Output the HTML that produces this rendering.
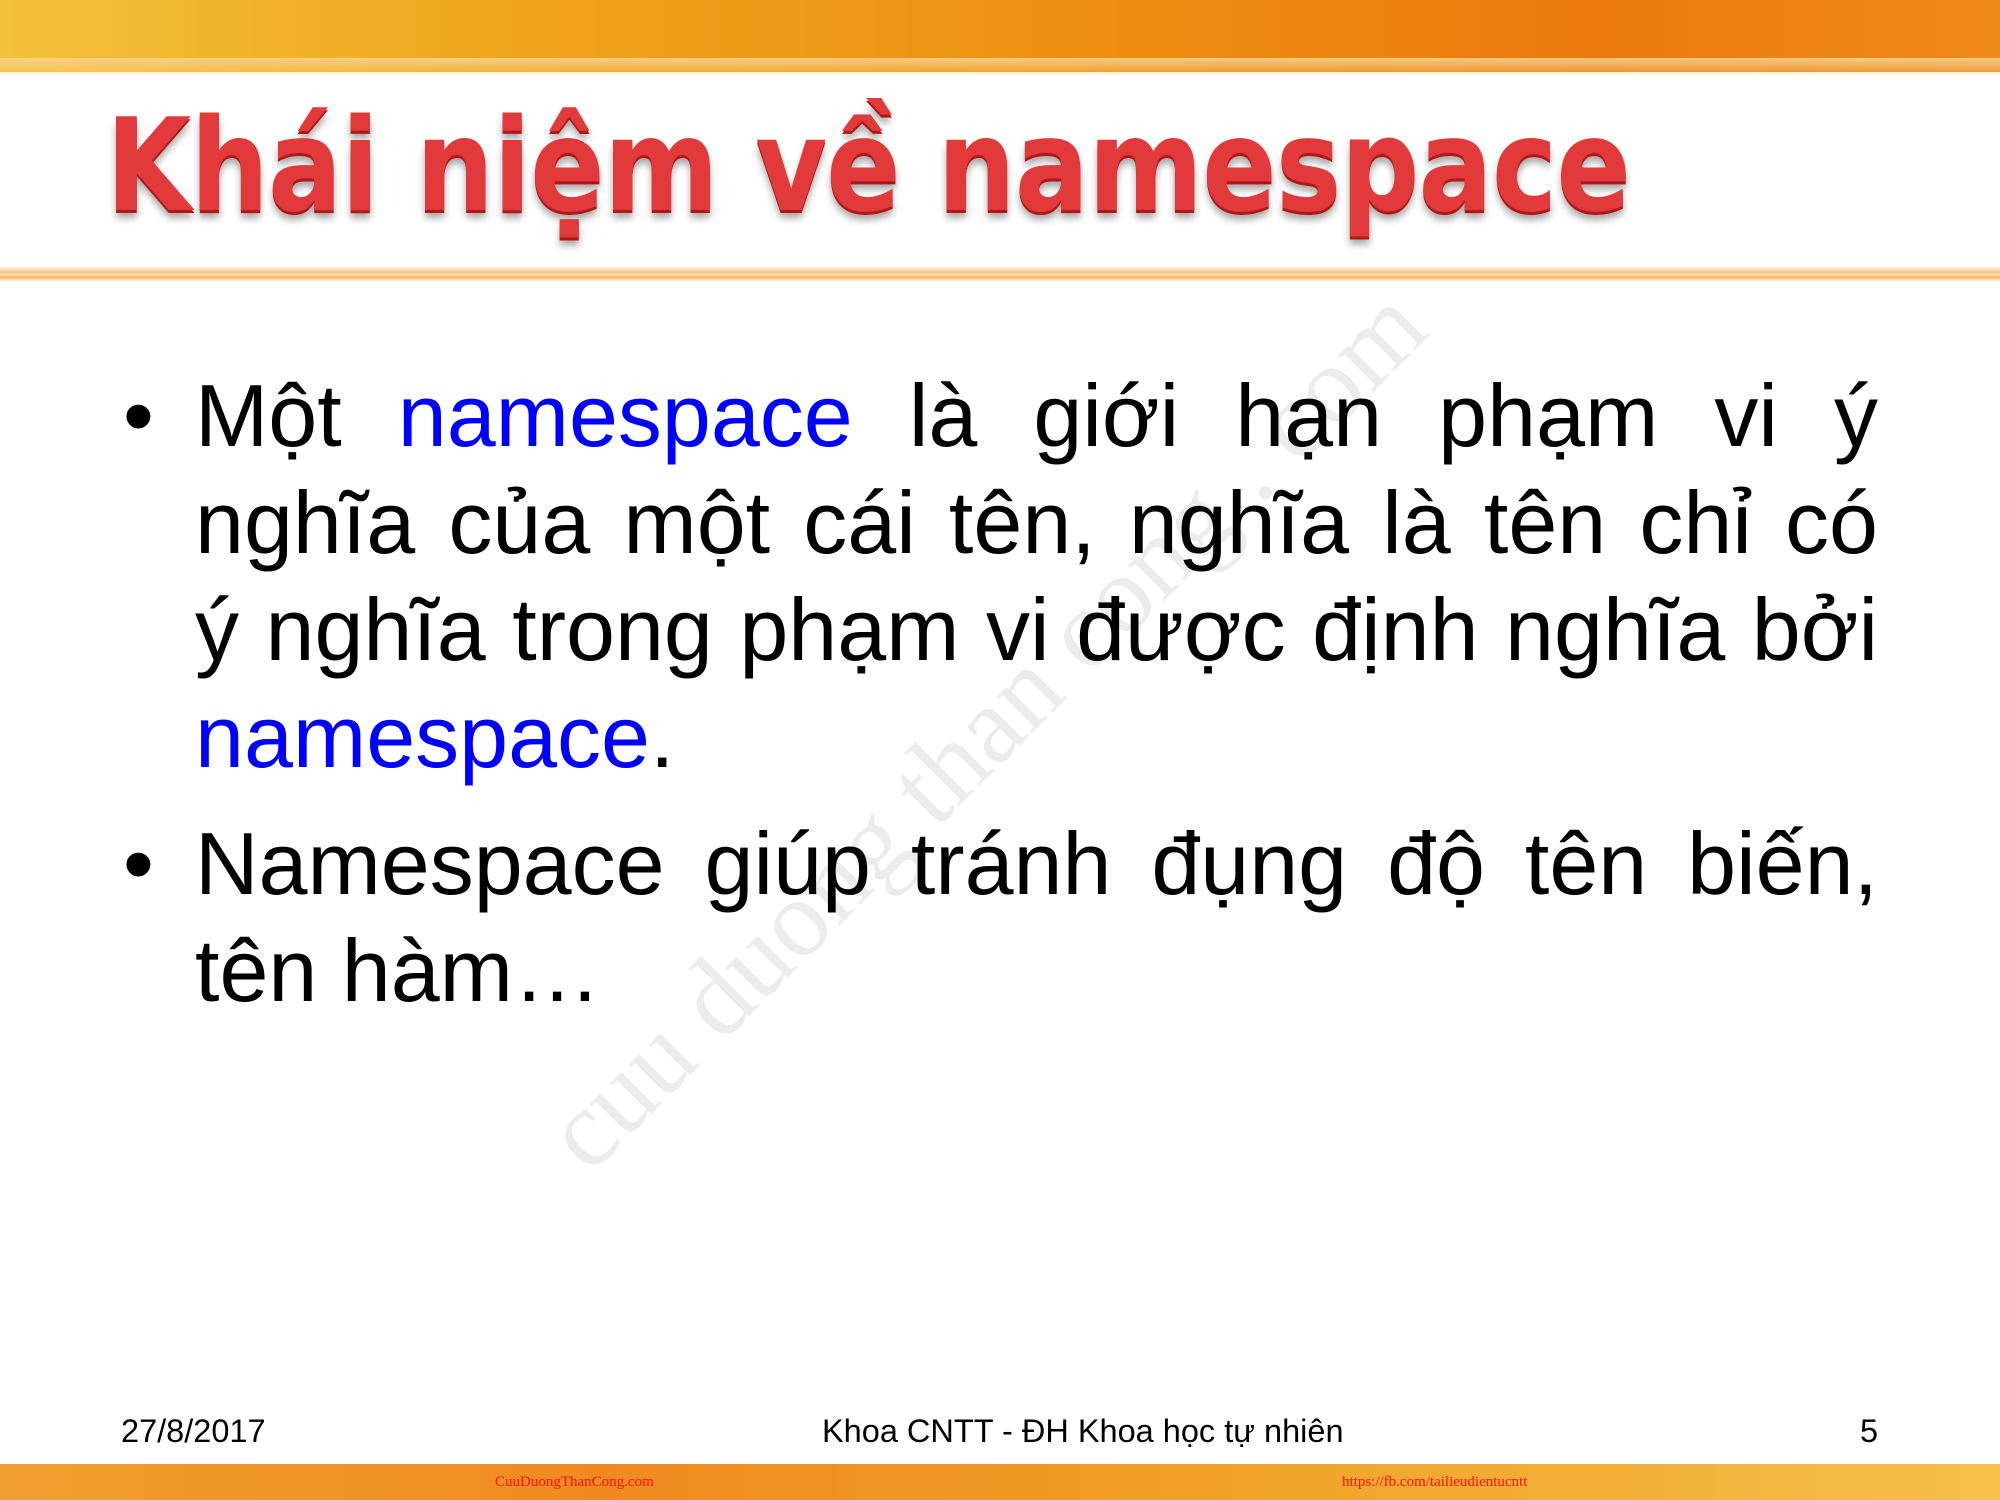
<!DOCTYPE html>
<html><head><meta charset="utf-8"><style>
html,body{margin:0;padding:0}
body{width:2000px;height:1500px;position:relative;overflow:hidden;background:#fff;font-family:"Liberation Sans","DejaVu Sans",sans-serif}
.top{position:absolute;left:0;top:0;width:2000px;height:72px;background:linear-gradient(90deg,#f2c23a 0%,#f0a51e 25%,#ee8e12 55%,#ec7a0e 80%,#f08a1a 100%)}
.top2{position:absolute;left:0;top:58px;width:2000px;height:20px;background:linear-gradient(180deg,rgba(250,210,140,.9),rgba(255,255,255,0))}
.line{position:absolute;left:0;top:266px;width:2000px;height:16px;background:linear-gradient(180deg,rgba(255,255,255,0),#f7c27a 40%,#fde3b8 55%,#f5b25a 70%,rgba(255,255,255,0))}
.title{position:absolute;left:106px;top:92px;font-family:"DejaVu Sans",sans-serif;font-weight:bold;font-size:128px;color:#e23a3a;white-space:nowrap;transform-origin:0 0;transform:scaleX(0.86);text-shadow:0 3px 0 #b01818,0 8px 8px rgba(0,0,0,.35);letter-spacing:-1px}
.wm{position:absolute;left:235px;top:665px;width:1500px;font-family:"Liberation Serif",serif;font-size:110px;color:#ececec;transform:rotate(-45deg);text-align:center;white-space:nowrap}
.body{position:absolute;left:195px;top:362px;width:1683px;font-size:88px;line-height:107px;color:#000}
.l{text-align:justify;text-align-last:justify;white-space:nowrap;height:107px}
.e{text-align:left;text-align-last:left}
.b{position:absolute;left:-72px}
.blue{color:#0000ff}
.foot{position:absolute;top:1413px;font-size:32.5px;color:#000}
.bot{position:absolute;left:0;top:1464px;width:2000px;height:36px;background:linear-gradient(90deg,#f0a030 0%,#ef8a20 30%,#f0a028 60%,#f5c04a 100%)}
.red{position:absolute;top:1474px;font-family:"Liberation Serif",serif;font-size:15px;color:#ff1010}
</style></head><body>
<div class="top"></div><div class="top2"></div>
<div class="title">Khái niệm về namespace</div>
<div class="line"></div>
<div class="wm">cuu duong than cong . com</div>
<div class="body">
<div class="l"><span class="b">•</span>Một <span class="blue">namespace</span> là giới hạn phạm vi ý</div>
<div class="l">nghĩa của một cái tên, nghĩa là tên chỉ có</div>
<div class="l">ý nghĩa trong phạm vi được định nghĩa bởi</div>
<div class="l e"><span class="blue">namespace</span>.</div>
<div style="height:20px"></div>
<div class="l"><span class="b">•</span>Namespace giúp tránh đụng độ tên biến,</div>
<div class="l e">tên hàm…</div>
</div>
<div class="foot" style="left:121px">27/8/2017</div>
<div class="foot" style="left:822px">Khoa CNTT - ĐH Khoa học tự nhiên</div>
<div class="foot" style="left:1860px">5</div>
<div class="bot"></div>
<div class="red" style="left:495px">CuuDuongThanCong.com</div>
<div class="red" style="left:1342px">https://fb.com/tailieudientucntt</div>
</body></html>
